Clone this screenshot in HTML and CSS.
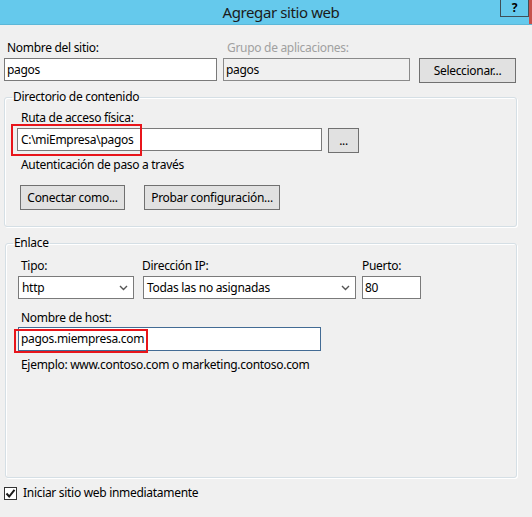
FILE: index.html
```html
<!DOCTYPE html>
<html lang="es">
<head>
<meta charset="utf-8">
<title>Agregar sitio web</title>
<link rel="stylesheet" href="styles.css">
</head>
<body>
<div class="window">
  <div class="titlebar">
    <div class="title">Agregar sitio web</div>
    <div class="help">?</div>
    <div class="close-edge"></div>
  </div>

  <div class="main">
    <div class="site-row">
      <label class="lbl lbl-site">Nombre del sitio:</label>
      <label class="lbl lbl-pool disabled">Grupo de aplicaciones:</label>
      <span></span>
      <div class="input">pagos</div>
      <div class="input readonly">pagos</div>
      <button class="btn btn-select">Seleccionar...</button>
    </div>

    <fieldset class="group group-content">
      <legend>Directorio de contenido</legend>
      <div class="inner">
        <label class="lbl lbl-path">Ruta de acceso física:</label>
        <div class="path-row">
          <div class="marked">
            <div class="input input-path">C:\miEmpresa\pagos</div>
            <div class="highlight hl-path"></div>
          </div>
          <button class="btn btn-browse">...</button>
        </div>
        <div class="lbl lbl-auth">Autenticación de paso a través</div>
        <div class="btn-row">
          <button class="btn btn-connect">Conectar como...</button>
          <button class="btn btn-test">Probar configuración...</button>
        </div>
      </div>
    </fieldset>

    <fieldset class="group group-binding">
      <legend>Enlace</legend>
      <div class="inner">
        <div class="binding-grid">
          <label class="lbl lbl-type">Tipo:</label>
          <label class="lbl lbl-ip">Dirección IP:</label>
          <label class="lbl lbl-port">Puerto:</label>
          <div class="select sel-type"><span>http</span><svg class="chev" width="9" height="6" viewBox="0 0 9 6"><path d="M1 1 L4.5 4.5 L8 1" fill="none" stroke="#555" stroke-width="1.4"/></svg></div>
          <div class="select sel-ip"><span>Todas las no asignadas</span><svg class="chev" width="9" height="6" viewBox="0 0 9 6"><path d="M1 1 L4.5 4.5 L8 1" fill="none" stroke="#555" stroke-width="1.4"/></svg></div>
          <div class="input input-port">80</div>
        </div>
        <label class="lbl lbl-host">Nombre de host:</label>
        <div class="marked">
          <div class="input input-host">pagos.miempresa.com</div>
          <div class="highlight hl-host"></div>
        </div>
        <div class="lbl lbl-example">Ejemplo: www.contoso.com o marketing.contoso.com</div>
      </div>
    </fieldset>

    <div class="check-row">
      <span class="checkbox"><svg width="11" height="11" viewBox="0 0 11 11"><path d="M1.5 5.5 L4.2 8.5 L9.5 1.8" fill="none" stroke="#1a1a1a" stroke-width="2"/></svg></span>
      <span class="check-label">Iniciar sitio web inmediatamente</span>
    </div>
  </div>
</div>
</body>
</html>
```

FILE: styles.css
```css
* { box-sizing: border-box; }

html, body {
  margin: 0;
  padding: 0;
  background: #f0f0f0;
}

body {
  font-family: "Noto Sans", "Open Sans", sans-serif;
  font-size: 12px;
  letter-spacing: -0.3px;
  color: #000;
}

.window {
  width: 532px;
  height: 517px;
  overflow: hidden;
  background: #f0f0f0;
}

.titlebar {
  height: 25px;
  background: #65c9ec;
  border-bottom: 1px solid #5cb7d8;
  display: flex;
  align-items: flex-start;
}

.title {
  flex: 1;
  padding-left: 62px;
  text-align: center;
  font-size: 15px;
  letter-spacing: -0.4px;
  line-height: 25px;
  color: #1b1b1b;
}

.help {
  flex: 0 0 29px;
  width: 29px;
  height: 17px;
  border: 1px solid #3f4f57;
  border-top: none;
  text-align: center;
  font-weight: bold;
  font-size: 12px;
  letter-spacing: 0;
  line-height: 16px;
  color: #000;
}

.close-edge {
  flex: 0 0 3px;
  width: 3px;
  height: 24px;
  background: #c6514c;
}

.main {
  padding-left: 4px;
}

.lbl {
  display: block;
  line-height: 16px;
  height: 16px;
  white-space: nowrap;
}

.disabled { color: #a0a0a0; }

.input {
  height: 23px;
  background: #fff;
  border: 1px solid #7a7a7a;
  padding-left: 2px;
  line-height: 21px;
  white-space: nowrap;
  overflow: hidden;
}

.input.readonly {
  background: #f0f0f0;
  border-color: #8a8a8a;
}

.btn {
  font-family: inherit;
  font-size: 12px;
  letter-spacing: -0.3px;
  color: #000;
  background: #e1e1e1;
  border: 1px solid #707070;
  height: 25px;
  padding: 0;
  margin: 0;
  line-height: 22px;
}

/* row 1 */
.site-row {
  display: grid;
  grid-template-columns: 213px 187px 100px;
  column-gap: 6px;
  row-gap: 2px;
  margin-top: 15px;
  align-items: start;
}

.site-row .btn-select { margin-left: 3px; width: 97px; }
.lbl-site { padding-left: 3px; }
.lbl-pool { padding-left: 4px; }

/* group boxes */
.group {
  margin: 6px 0 0 0;
  width: 513px;
  border: 1px solid #d5dfe5;
  border-radius: 3px;
  box-shadow: inset 1px 1px 0 #fff, 1px 1px 0 #fff;
  padding: 0 0 0 7px;
}

.group legend {
  padding: 0 1px;
  line-height: 16px;
}

.inner {
  margin-left: 5px;
}

.group-content {
  padding-bottom: 16px;
}

.lbl-path {
  margin-top: 5px;
  padding-left: 4px;
}

.path-row {
  display: flex;
  align-items: flex-start;
  margin-top: 2px;
}

.marked { position: relative; }

.input-path {
  width: 305px;
  padding-left: 3px;
}

.highlight {
  position: absolute;
  border: 2px solid #e8151b;
  pointer-events: none;
}

.hl-path {
  left: -6px;
  top: -4px;
  width: 131px;
  height: 32px;
}

.btn-browse {
  width: 31px;
  margin-left: 6px;
  line-height: 20px;
}

.lbl-auth {
  margin-top: 4px;
  padding-left: 4px;
}

.btn-row {
  display: flex;
  margin-top: 12px;
}

.btn-connect { width: 105px; margin-left: 3px; }
.btn-test { width: 136px; margin-left: 19px; }

/* binding */
.group-binding {
  margin-top: 8px;
  margin-left: 1px;
  width: 512px;
  height: 243px;
}

.binding-grid {
  display: grid;
  grid-template-columns: 125px 219px 59px;
  row-gap: 2px;
  margin-top: 7px;
}

.sel-type { width: 116px; }
.sel-ip { width: 213px; }
.input-port { width: 59px; }

.lbl-type { padding-left: 3px; }
.lbl-ip { margin-left: -1px; }
.lbl-port { padding-left: 0; }

.select {
  height: 23px;
  background: #fff;
  border: 1px solid #7a7a7a;
  display: flex;
  align-items: center;
  justify-content: space-between;
  padding: 0 5px 0 3px;
  white-space: nowrap;
}

.chev { display: block; }

.lbl-host {
  margin-top: 11px;
  padding-left: 3px;
}

.input-host {
  margin-top: 1px;
  width: 303px;
  height: 24px;
  border-color: #426b94;
  padding-left: 2px;
}

.hl-host {
  left: -4px;
  top: 2px;
  width: 134px;
  height: 24px;
}

.lbl-example {
  margin-top: 6px;
  padding-left: 3px;
}

/* checkbox */
.check-row {
  display: flex;
  align-items: center;
  margin-top: 7px;
}

.checkbox {
  width: 13px;
  height: 13px;
  border: 1px solid #333;
  background: #fff;
  display: flex;
  align-items: center;
  justify-content: center;
}

.check-label {
  margin-left: 6px;
  line-height: 16px;
}
```
